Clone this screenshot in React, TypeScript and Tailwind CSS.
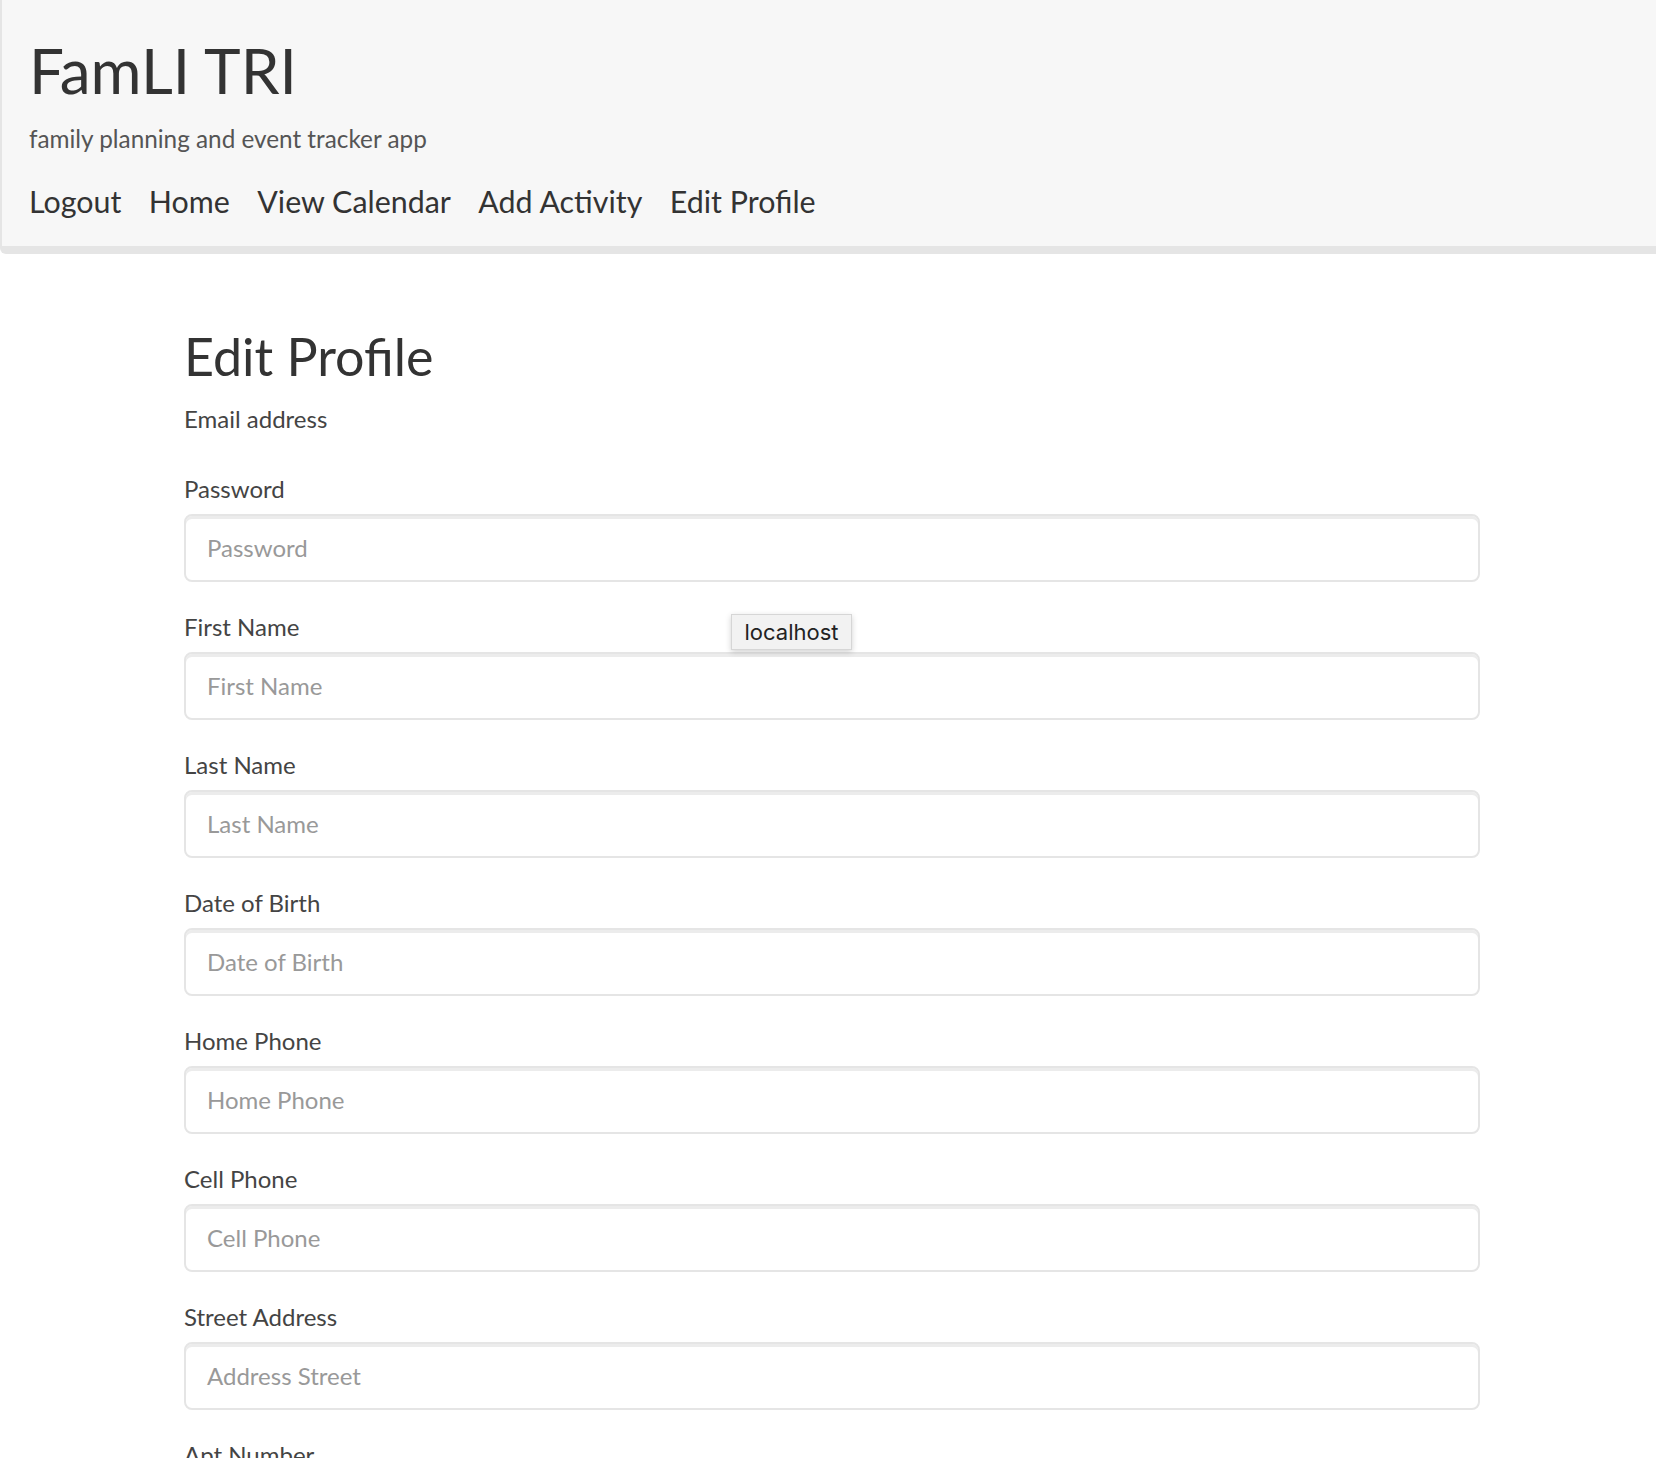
import React from "react";

const fields: { label: string; placeholder?: string }[] = [
  { label: "Email address" },
  { label: "Password", placeholder: "Password" },
  { label: "First Name", placeholder: "First Name" },
  { label: "Last Name", placeholder: "Last Name" },
  { label: "Date of Birth", placeholder: "Date of Birth" },
  { label: "Home Phone", placeholder: "Home Phone" },
  { label: "Cell Phone", placeholder: "Cell Phone" },
  { label: "Street Address", placeholder: "Address Street" },
  { label: "Apt Number", placeholder: "Apt Number" },
];

export default function App() {
  return (
    <div className="min-h-[1458px] bg-white text-[#333]" style={{ fontFamily: "Lato, 'Noto Sans', sans-serif" }}>
      <header className="h-[254px] bg-[#f7f7f7] border-l-2 border-b-8 border-[#e5e5e5] rounded-bl-md pl-[27px] pt-[38px]">
        <h1 className="text-[62px] leading-[64px] text-[#333]">FamLI TRI</h1>
        <p className="mt-[22px] text-[24.3px] leading-[30px] text-[#555]">family planning and event tracker app</p>
        <nav className="mt-[27px] flex gap-[27.5px] text-[30.4px] leading-[40px] text-[#333]">
          <a>Logout</a>
          <a>Home</a>
          <a>View Calendar</a>
          <a>Add Activity</a>
          <a>Edit Profile</a>
        </nav>
      </header>
      <main className="ml-[184px] w-[1296px] pt-[72px]">
        <h2 className="text-[52px] leading-[60px] text-[#333] mb-[18px]">Edit Profile</h2>
        {fields.map((f) => (
          <div key={f.label} className="flex flex-col gap-[10px] pb-[30px]">
            <label className="block text-[24px] leading-[30px] text-[#444]">{f.label}</label>
            {f.placeholder ? (
              <div className="h-[68px] border-2 border-[#e5e5e5] rounded-lg bg-white shadow-[inset_0_3px_0_#ececec] pl-[21px] flex items-center text-[24px] text-[#999]">
                {f.placeholder}
              </div>
            ) : (
              <div className="h-0" />
            )}
          </div>
        ))}
      </main>
      <div
        className="absolute left-[731px] top-[614px] w-[121px] h-[36px] bg-[#f2f2f2] border border-[#d6d6d6] shadow-[0_2px_6px_rgba(0,0,0,0.18)] flex items-center justify-center text-[22px] text-[#222]"
        style={{ fontFamily: "Inter, 'Liberation Sans', sans-serif" }}
      >
        localhost
      </div>
    </div>
  );
}
